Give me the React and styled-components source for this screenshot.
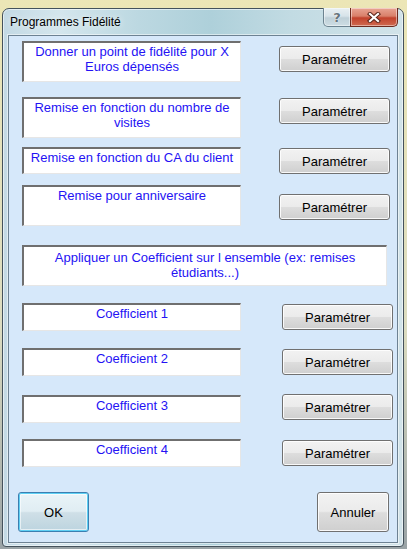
import styled, { createGlobalStyle } from 'styled-components';

const GlobalStyle = createGlobalStyle`
  * { box-sizing: border-box; }
  html, body {
    margin: 0;
    padding: 0;
    background: linear-gradient(to bottom, #ece6b6 0%, #dcdcc0 60%, #9aa3a6 100%);
    font-family: 'Liberation Sans', Arial, sans-serif;
  }
  #root {
    width: 407px;
    height: 549px;
    padding: 8px 3px 2px 2px;
  }
`;

const Window = styled.div`
  width: 402px;
  height: 539px;
  border: 1px solid #44525c;
  border-radius: 7px 7px 4px 4px;
  box-shadow: inset 0 0 0 1px rgba(255, 255, 255, 0.55);
  background: linear-gradient(
    to right,
    #c3d9e4 0%,
    #d4e6ed 14%,
    #bcd8e1 34%,
    #aed0da 52%,
    #c2dbe3 72%,
    #d1e3e9 100%
  );
  padding: 0 5px 3px 5px;
  display: flex;
  flex-direction: column;
`;

const TitleBar = styled.div`
  height: 26px;
  display: flex;
  align-items: flex-start;
  justify-content: space-between;
`;

const Title = styled.span`
  font-size: 12px;
  line-height: 27px;
  color: #000;
  padding-left: 2px;
  text-shadow: 0 0 6px rgba(255, 255, 255, 0.9);
`;

const Caption = styled.div`
  display: flex;
  margin-top: -1px;
`;

const CapButton = styled.div`
  height: 19px;
  width: ${(p) => p.$w}px;
  display: flex;
  align-items: center;
  justify-content: center;
  border: 1px solid ${(p) => (p.$close ? '#6b2a1f' : '#6c8390')};
  border-top: none;
  border-radius: ${(p) => (p.$close ? '0 0 5px 0' : '0 0 0 5px')};
  margin-left: ${(p) => (p.$close ? '-1px' : '0')};
  box-shadow: inset 0 0 0 1px rgba(255, 255, 255, 0.45);
  background: ${(p) =>
    p.$close
      ? 'linear-gradient(to bottom, #e8a493 0%, #d9806a 45%, #c2422c 55%, #cf6a50 100%)'
      : 'linear-gradient(to bottom, #e9f0f3 0%, #d7e3e9 45%, #bfd0d8 55%, #cddde4 100%)'};
`;

const HelpMark = styled.span`
  font-family: 'DejaVu Sans', sans-serif;
  font-weight: bold;
  font-size: 13px;
  line-height: 1;
  color: #66747c;
  text-shadow: 0 0 1px #fff, 0 0 1px #fff;
`;

const Client = styled.div`
  flex: 1;
  border: 1px solid #6d8293;
  box-shadow: 0 0 0 1px rgba(255, 255, 255, 0.5);
  background: #d6e8fa;
  padding: 5px 1px 9px 13px;
  display: flex;
  flex-direction: column;
`;

const Row = styled.div`
  display: flex;
  align-items: flex-start;
  margin-top: ${(p) => p.$top}px;
`;

const Label = styled.div`
  width: ${(p) => p.$w}px;
  height: ${(p) => p.$h}px;
  background: #fff;
  border-style: solid;
  border-width: 2px 1px 1px 2px;
  border-color: #6f6f6f #e6e6e6 #e6e6e6 #6f6f6f;
  color: #2412f4;
  font-size: 13px;
  line-height: 15px;
  text-align: center;
  padding: ${(p) => p.$pad || 1}px 2px 0;
`;

const Button = styled.button`
  width: ${(p) => p.$w || 111}px;
  height: ${(p) => p.$h || 26}px;
  margin-top: ${(p) => p.$top || 0}px;
  margin-left: ${(p) => p.$left || 0}px;
  padding: 0;
  font-family: 'Liberation Sans', Arial, sans-serif;
  font-size: 13px;
  color: #000;
  border: 1px solid #707070;
  border-radius: 3px;
  box-shadow: inset 0 0 0 1px rgba(255, 255, 255, 0.85);
  background: linear-gradient(to bottom, #f2f2f2 0%, #ebebeb 48%, #dddddd 52%, #cfcfcf 100%);
`;

const DefaultButton = styled(Button)`
  border-color: #3c7fb1;
  box-shadow: inset 0 0 0 1px #5ed0f4, inset 0 0 0 2px rgba(255, 255, 255, 0.6);
  background: linear-gradient(to bottom, #eaf4f8 0%, #e0edf3 48%, #cfdfe7 52%, #bcd4df 100%);
`;

const Footer = styled.div`
  display: flex;
  justify-content: space-between;
  margin-top: 25px;
  margin-left: -4px;
  padding-right: 7px;
`;

const programmes = [
  { text: 'Donner un point de fidélité pour X Euros dépensés', top: 0, h: 41, btn: 5 },
  { text: 'Remise en fonction du nombre de visites', top: 15, h: 41, btn: 1 },
  { text: 'Remise en fonction du CA du client', top: 9, h: 27, btn: 1 },
  { text: 'Remise pour anniversaire', top: 11, h: 41, btn: 9 },
];

const coefficients = [
  { text: 'Coefficient 1', top: 17, btn: 1 },
  { text: 'Coefficient 2', top: 17, btn: 1 },
  { text: 'Coefficient 3', top: 19, btn: -1 },
  { text: 'Coefficient 4', top: 16, btn: 1 },
];

const CloseIcon = () => (
  <svg width="14" height="11" viewBox="0 0 14 11">
    <path d="M3 2 L11 9 M11 2 L3 9" stroke="#5b261b" strokeWidth="4.2" strokeLinecap="square" />
    <path d="M3 2 L11 9 M11 2 L3 9" stroke="#fff" strokeWidth="2.2" strokeLinecap="square" />
  </svg>
);

export default function App() {
  return (
    <>
      <GlobalStyle />
      <Window>
        <TitleBar>
          <Title>Programmes Fidélité</Title>
          <Caption>
            <CapButton $w={28}>
              <HelpMark>?</HelpMark>
            </CapButton>
            <CapButton $w={48} $close>
              <CloseIcon />
            </CapButton>
          </Caption>
        </TitleBar>
        <Client>
          {programmes.map((p) => (
            <Row key={p.text} $top={p.top}>
              <Label $w={219} $h={p.h}>{p.text}</Label>
              <Button $top={p.btn} $left={38}>Paramétrer</Button>
            </Row>
          ))}
          <Row $top={19}>
            <Label $w={365} $h={41} $pad={3}>
              Appliquer un Coefficient sur l ensemble (ex: remises étudiants...)
            </Label>
          </Row>
          {coefficients.map((c) => (
            <Row key={c.text} $top={c.top}>
              <Label $w={219} $h={28}>{c.text}</Label>
              <Button $top={c.btn} $left={41}>Paramétrer</Button>
            </Row>
          ))}
          <Footer>
            <DefaultButton $w={71} $h={40}>OK</DefaultButton>
            <Button $w={72} $h={40}>Annuler</Button>
          </Footer>
        </Client>
      </Window>
    </>
  );
}
